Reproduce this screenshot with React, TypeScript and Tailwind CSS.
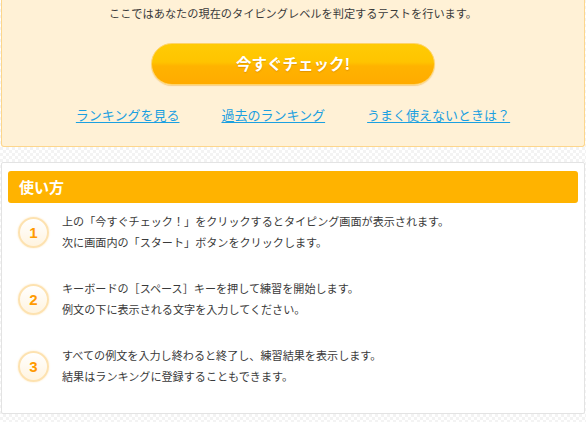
import React from "react";

const jp = { fontFamily: '"Noto Sans CJK JP", "Noto Sans", sans-serif' };

function Step({ n, lines }: { n: string; lines: string[] }) {
  return (
    <div className="flex items-center">
      <div className="ml-[10px] w-[31px] h-[31px] rounded-full border-2 border-[#fde2b0] bg-gradient-to-b from-white to-[#fff4e0] shadow-[0_0_2px_#fde6bd] flex items-center justify-center shrink-0">
        <span className="text-[15px] font-bold text-[#ff9a00] leading-none" style={{ fontFamily: '"Liberation Sans", Arial, sans-serif' }}>{n}</span>
      </div>
      <div className="ml-[13px] text-[11.1px] leading-[21px] text-[#3a3a3a]">
        {lines.map((l, i) => (
          <div key={i}>{l}</div>
        ))}
      </div>
    </div>
  );
}

export default function App() {
  return (
    <div
      className="w-[586px] h-[422px] overflow-hidden bg-[repeating-conic-gradient(#f3f3f3_0%_25%,#ffffff_0%_50%)] bg-[length:6px_6px] px-[1px]"
      style={jp}
    >
      <div className="h-[147px] bg-[#fff1d6] border-x border-b border-[#fdd68c] rounded-b-[3px] flex flex-col items-center">
        <div className="pt-[5px] text-[11.2px] leading-[16px] text-[#3a3a3a]">
          ここではあなたの現在のタイピングレベルを判定するテストを行います。
        </div>
        <div className="mt-[22px] w-[284px] h-[42px] rounded-full border border-[#ffd46a] bg-[linear-gradient(to_bottom,#ffcb05_0%,#ffc400_45%,#ffb300_55%,#ffab00_100%)] shadow-[0_1px_1px_rgba(230,150,0,0.35)] flex items-center justify-center">
          <span className="text-[15.5px] font-bold text-white [text-shadow:0_1px_1px_rgba(200,120,0,0.5)]">今すぐチェック!</span>
        </div>
        <div className="mt-[20px] flex text-[13px] leading-[19px] text-[#1ba0e0]">
          <span className="underline underline-offset-2">ランキングを見る</span>
          <span className="ml-[42px] underline underline-offset-2">過去のランキング</span>
          <span className="ml-[42px] underline underline-offset-2">うまく使えないときは？</span>
        </div>
      </div>
      <div className="mt-[15px] h-[252px] bg-white border border-[#e3e3e3] rounded-[2px] pt-[8px] px-[6px]">
        <div className="h-[32px] rounded-[3px] bg-[#ffb300] flex items-center pl-[11px]">
          <span className="text-[15px] font-bold text-white">使い方</span>
        </div>
        <div className="pt-[8px] flex flex-col gap-[25px]">
          <Step n="1" lines={["上の「今すぐチェック！」をクリックするとタイピング画面が表示されます。", "次に画面内の「スタート」ボタンをクリックします。"]} />
          <Step n="2" lines={["キーボードの［スペース］キーを押して練習を開始します。", "例文の下に表示される文字を入力してください。"]} />
          <Step n="3" lines={["すべての例文を入力し終わると終了し、練習結果を表示します。", "結果はランキングに登録することもできます。"]} />
        </div>
      </div>
    </div>
  );
}
